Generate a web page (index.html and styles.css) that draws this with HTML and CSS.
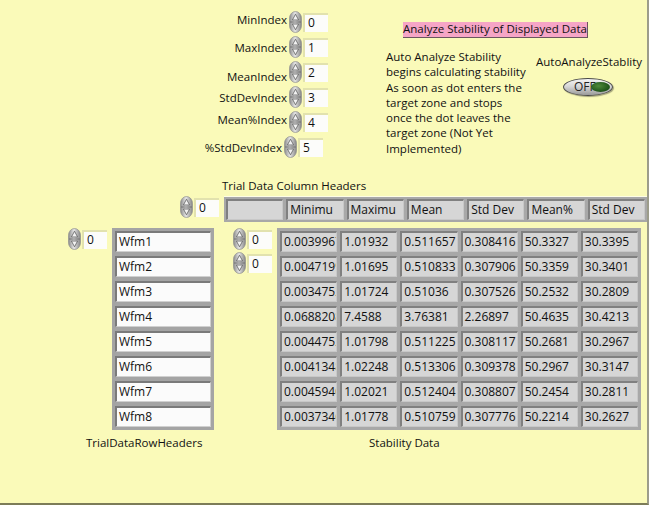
FILE: index.html
```html
<!DOCTYPE html>
<html>
<head>
<meta charset="utf-8">
<link rel="stylesheet" href="styles.css">
</head>
<body>
<svg class="defs" width="0" height="0" aria-hidden="true">
  <defs>
    <linearGradient id="spin-grad" x1="0" x2="1" y1="0" y2="0">
      <stop offset="0" stop-color="#8a8a8a"/>
      <stop offset="0.45" stop-color="#e6e6e6"/>
      <stop offset="1" stop-color="#858585"/>
    </linearGradient>
    <symbol id="spin" viewBox="0 0 13 22">
      <rect x="0.5" y="0.5" width="12" height="21" rx="6" ry="7" fill="url(#spin-grad)" stroke="#8f8f8f" stroke-width="0.7"/>
      <line x1="1" y1="11" x2="12" y2="11" stroke="#6e6e6e" stroke-width="0.9"/>
      <path d="M6.5 3.2 L9.6 9 H3.4 Z" fill="#f2f2f2" stroke="#5e5e5e" stroke-width="0.8" stroke-linejoin="round"/>
      <path d="M6.5 18.8 L9.6 13 H3.4 Z" fill="#f2f2f2" stroke="#5e5e5e" stroke-width="0.8" stroke-linejoin="round"/>
    </symbol>
  </defs>
</svg>

<div class="panel">
  <div class="indices">
    <div class="idx-row"><span class="idx-label lbl-high">MinIndex</span><svg class="spin"><use href="#spin"/></svg><span class="numbox">0</span></div>
    <div class="idx-row"><span class="idx-label">MaxIndex</span><svg class="spin"><use href="#spin"/></svg><span class="numbox">1</span></div>
    <div class="idx-row"><span class="idx-label lbl-low">MeanIndex</span><svg class="spin"><use href="#spin"/></svg><span class="numbox">2</span></div>
    <div class="idx-row"><span class="idx-label">StdDevIndex</span><svg class="spin"><use href="#spin"/></svg><span class="numbox">3</span></div>
    <div class="idx-row"><span class="idx-label lbl-high">Mean%Index</span><svg class="spin"><use href="#spin"/></svg><span class="numbox">4</span></div>
    <div class="idx-row idx-row-last"><span class="idx-label">%StdDevIndex</span><svg class="spin"><use href="#spin"/></svg><span class="numbox">5</span></div>
  </div>

  <div class="analyze-btn">Analyze Stability of Displayed Data</div>

  <div class="desc">Auto Analyze Stability begins calculating stability As soon as dot enters the target zone and stops once the dot leaves the target zone (Not Yet Implemented)</div>

  <div class="auto">
    <div class="auto-label">AutoAnalyzeStablity</div>
    <div class="switch"><span class="switch-text">OFF</span><span class="switch-lamp"></span></div>
  </div>

  <div class="colhdr">
    <div class="colhdr-label">Trial Data Column Headers</div>
    <div class="colhdr-row">
      <div class="index"><svg class="spin"><use href="#spin"/></svg><span class="numbox">0</span></div>
      <div class="hdr-frame">
        <div class="cell"></div>
        <div class="cell">Minimu</div>
        <div class="cell">Maximu</div>
        <div class="cell">Mean</div>
        <div class="cell">Std Dev</div>
        <div class="cell">Mean%</div>
        <div class="cell">Std Dev</div>
      </div>
    </div>
  </div>

  <div class="lower">
    <div class="index"><svg class="spin"><use href="#spin"/></svg><span class="numbox">0</span></div>
    <div class="rowhdr-frame">
      <div class="wcell">Wfm1</div>
      <div class="wcell">Wfm2</div>
      <div class="wcell">Wfm3</div>
      <div class="wcell">Wfm4</div>
      <div class="wcell">Wfm5</div>
      <div class="wcell">Wfm6</div>
      <div class="wcell">Wfm7</div>
      <div class="wcell">Wfm8</div>
    </div>
    <div class="data-index">
      <div class="index"><svg class="spin"><use href="#spin"/></svg><span class="numbox">0</span></div>
      <div class="index"><svg class="spin"><use href="#spin"/></svg><span class="numbox">0</span></div>
    </div>
    <div class="data-frame">
      <div class="cell">0.0039967</div><div class="cell">1.01932</div><div class="cell">0.511657</div><div class="cell">0.308416</div><div class="cell">50.3327</div><div class="cell">30.3395</div>
      <div class="cell">0.0047199</div><div class="cell">1.01695</div><div class="cell">0.510833</div><div class="cell">0.307906</div><div class="cell">50.3359</div><div class="cell">30.3401</div>
      <div class="cell">0.0034752</div><div class="cell">1.01724</div><div class="cell">0.51036</div><div class="cell">0.307526</div><div class="cell">50.2532</div><div class="cell">30.2809</div>
      <div class="cell">0.0688208</div><div class="cell">7.4588</div><div class="cell">3.76381</div><div class="cell">2.26897</div><div class="cell">50.4635</div><div class="cell">30.4213</div>
      <div class="cell">0.0044752</div><div class="cell">1.01798</div><div class="cell">0.511225</div><div class="cell">0.308117</div><div class="cell">50.2681</div><div class="cell">30.2967</div>
      <div class="cell">0.0041348</div><div class="cell">1.02248</div><div class="cell">0.513306</div><div class="cell">0.309378</div><div class="cell">50.2967</div><div class="cell">30.3147</div>
      <div class="cell">0.0045940</div><div class="cell">1.02021</div><div class="cell">0.512404</div><div class="cell">0.308807</div><div class="cell">50.2454</div><div class="cell">30.2811</div>
      <div class="cell">0.0037346</div><div class="cell">1.01778</div><div class="cell">0.510759</div><div class="cell">0.307776</div><div class="cell">50.2214</div><div class="cell">30.2627</div>
    </div>
  </div>

  <div class="lbl-rowhdr">TrialDataRowHeaders</div>
  <div class="lbl-data">Stability Data</div>
</div>
</body>
</html>
```

FILE: styles.css
```css
html, body {
  margin: 0;
  padding: 0;
  background: #fafab9;
}

.defs {
  position: absolute;
  width: 0;
  height: 0;
}

.panel {
  position: relative;
  width: 649px;
  height: 505px;
  box-sizing: border-box;
  background: #fafab9;
  border-right: 2px solid #9c9c8a;
  border-bottom: 2px solid #7c7c58;
  font-family: "Open Sans", "Noto Sans", sans-serif;
  font-size: 11.5px;
  color: #111;
  overflow: hidden;
}

.spin {
  width: 13px;
  height: 22px;
  flex: none;
  display: block;
}

.numbox {
  display: block;
  box-sizing: border-box;
  width: 25px;
  height: 19px;
  background: #fcfcfa;
  border-top: 2px solid #e2e2ae;
  border-left: 2px solid #e2e2ae;
  padding-left: 3px;
  line-height: 16px;
  font-size: 12px;
  margin-left: 1px;
}

/* index controls */
.indices {
  position: absolute;
  left: 170px;
  top: 11px;
  width: 158px;
  display: flex;
  flex-direction: column;
  gap: 3px;
}

.idx-row {
  height: 22px;
  display: flex;
  justify-content: flex-end;
  align-items: center;
}

.idx-row-last {
  padding-right: 5px;
}

.idx-label {
  margin-right: 2px;
  white-space: nowrap;
}

.lbl-high { padding-bottom: 5px; }
.lbl-low { padding-top: 9px; }

/* button */
.analyze-btn {
  position: absolute;
  left: 403px;
  top: 22px;
  width: 185px;
  height: 16px;
  box-sizing: border-box;
  background: #f6a5c6;
  border-right: 1px solid #6d5560;
  border-bottom: 1px solid #6d5560;
  text-align: center;
  line-height: 14px;
  white-space: nowrap;
}

.desc {
  position: absolute;
  left: 386px;
  top: 49px;
  width: 141px;
  line-height: 15.3px;
}

.auto {
  position: absolute;
  left: 536px;
  top: 54px;
  display: flex;
  flex-direction: column;
}

.auto-label {
  white-space: nowrap;
  line-height: 16px;
}

.switch {
  position: relative;
  margin-top: 8px;
  margin-left: 27px;
  width: 50px;
  height: 18px;
  box-sizing: border-box;
  border: 1px solid #4a4a4a;
  border-radius: 50%;
  background: linear-gradient(#f4f4f4 0%, #d8d8d8 45%, #9a9a9a 100%);
  box-shadow: 1px 1px 1px rgba(0,0,0,0.35);
}

.switch-text {
  position: absolute;
  left: 10px;
  top: 0;
  line-height: 16px;
  font-size: 12px;
  color: #222;
}

.switch-lamp {
  position: absolute;
  right: 2px;
  top: 3px;
  width: 19px;
  height: 10px;
  border-radius: 50%;
  background: radial-gradient(ellipse at 40% 40%, #4f8a3a 0%, #245a1e 60%, #163d12 100%);
}

/* column headers */
.colhdr {
  position: absolute;
  left: 180px;
  top: 178px;
}

.colhdr-label {
  margin-left: 42px;
  line-height: 16px;
  white-space: nowrap;
}

.colhdr-row {
  margin-top: 2px;
  display: flex;
  align-items: flex-start;
  gap: 5px;
}

.index {
  display: flex;
  align-items: flex-start;
}

.index .numbox {
  margin-top: 2px;
}

.hdr-frame {
  width: 423px;
  box-sizing: border-box;
  padding: 2px;
  background: #a8a8a8;
  border-top: 1px solid #fefee6;
  display: grid;
  grid-template-columns: repeat(7, 1fr);
  gap: 3px;
}

.cell {
  height: 21px;
  box-sizing: border-box;
  background: #d6d6d6;
  border-style: solid;
  border-width: 2px 1px 1px 2px;
  border-color: #808080 #c8c8c8 #c8c8c8 #808080;
  padding-left: 2px;
  line-height: 17px;
  white-space: nowrap;
  overflow: hidden;
  font-size: 12px;
}

/* lower area */
.lower {
  position: absolute;
  left: 68px;
  top: 228px;
  display: flex;
  align-items: flex-start;
}

.rowhdr-frame {
  margin-left: 5px;
  width: 102px;
  box-sizing: border-box;
  padding: 3px;
  background: #a4a4a4;
  display: flex;
  flex-direction: column;
  gap: 4px;
}

.wcell {
  height: 21px;
  box-sizing: border-box;
  background: #fbfbfb;
  border-style: solid;
  border-width: 2px 1px 1px 2px;
  border-color: #7a7a7a #d0d0d0 #d0d0d0 #7a7a7a;
  padding-left: 2px;
  line-height: 17px;
  font-size: 12px;
}

.data-index {
  margin-left: 19px;
  display: flex;
  flex-direction: column;
  gap: 2px;
}

.data-frame {
  margin-left: 5px;
  width: 364px;
  box-sizing: border-box;
  padding: 3px;
  background: #a8a8a8;
  display: grid;
  grid-template-columns: repeat(6, 1fr);
  column-gap: 3px;
  row-gap: 4px;
}

.lbl-rowhdr {
  position: absolute;
  left: 86px;
  top: 435px;
  line-height: 16px;
}

.lbl-data {
  position: absolute;
  left: 369px;
  top: 435px;
  line-height: 16px;
}
```
